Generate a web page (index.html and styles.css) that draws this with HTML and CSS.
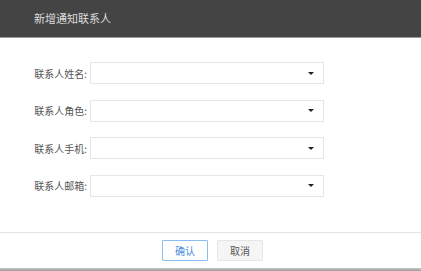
FILE: index.html
```html
<!DOCTYPE html>
<html>
    <head>
        <meta charset="utf-8">
        <title>新增通知联系人</title>
        <link rel="stylesheet" href="styles.css">
    </head>
  <body>
    <div class="dialog">
        <div class="dialog-head">新增通知联系人</div>
        <div class="dialog-body">
            <div class="row">
                <label class="label">联系人姓名:</label>
                <div class="select"><span class="caret"></span></div>
            </div>
            <div class="row">
                <label class="label">联系人角色:</label>
                <div class="select"><span class="caret"></span></div>
            </div>
            <div class="row">
                <label class="label">联系人手机:</label>
                <div class="select"><span class="caret"></span></div>
            </div>
            <div class="row">
                <label class="label">联系人邮箱:</label>
                <div class="select"><span class="caret"></span></div>
            </div>
        </div>
        <div class="dialog-foot">
            <button class="btn btn-ok">确认</button>
            <button class="btn btn-cancel">取消</button>
        </div>
    </div>
    <div class="page-edge"></div>
  </body>
</html>
```

FILE: styles.css
```css
* {
    margin: 0;
    padding: 0;
    box-sizing: border-box;
}
html, body {
    height: 100%;
}
body {
    display: flex;
    flex-direction: column;
    font: 10px 'Noto Sans CJK SC', 'Noto Sans', sans-serif;
    color: #555;
    background: #fff;
    overflow: hidden;
}
.dialog {
    flex: 1;
    display: flex;
    flex-direction: column;
}
.dialog-head {
    height: 38px;
    padding-left: 34px;
    line-height: 37px;
    background: #444;
    border-bottom: 1px solid #9a9a9a;
    color: #ddd;
    font-size: 11px;
}
.dialog-body {
    display: flex;
    flex-direction: column;
    gap: 15.5px;
    padding: 24px 0 35px;
    border-bottom: 1px solid #e4e4e4;
}
.row {
    display: flex;
    align-items: center;
    height: 22px;
}
.label {
    width: 88px;
    padding-right: 1px;
    text-align: right;
    color: #555;
}
.select {
    display: flex;
    align-items: center;
    justify-content: flex-end;
    width: 234px;
    height: 22px;
    margin-left: 2px;
    padding-right: 9px;
    border: 1px solid #e6e6e6;
    background: #fff;
}
.caret {
    width: 0;
    height: 0;
    border-left: 3px solid transparent;
    border-right: 3px solid transparent;
    border-top: 3px solid #222;
}
.dialog-foot {
    display: flex;
    justify-content: center;
    gap: 9px;
    padding: 7px 0 0 4px;
}
.btn {
    width: 46px;
    height: 21px;
    outline: 0;
    border-radius: 1px;
    font: 10px 'Noto Sans CJK SC', 'Noto Sans', sans-serif;
    cursor: pointer;
}
.btn-ok {
    border: 1px solid #8cbdf0;
    background: #fff;
    color: #4a8fd8;
}
.btn-cancel {
    border: 1px solid #e6e6e6;
    background: #f5f5f5;
    color: #555;
}
.page-edge {
    height: 3px;
    background: linear-gradient(#c8c8c8, #9c9c9c);
}
```
